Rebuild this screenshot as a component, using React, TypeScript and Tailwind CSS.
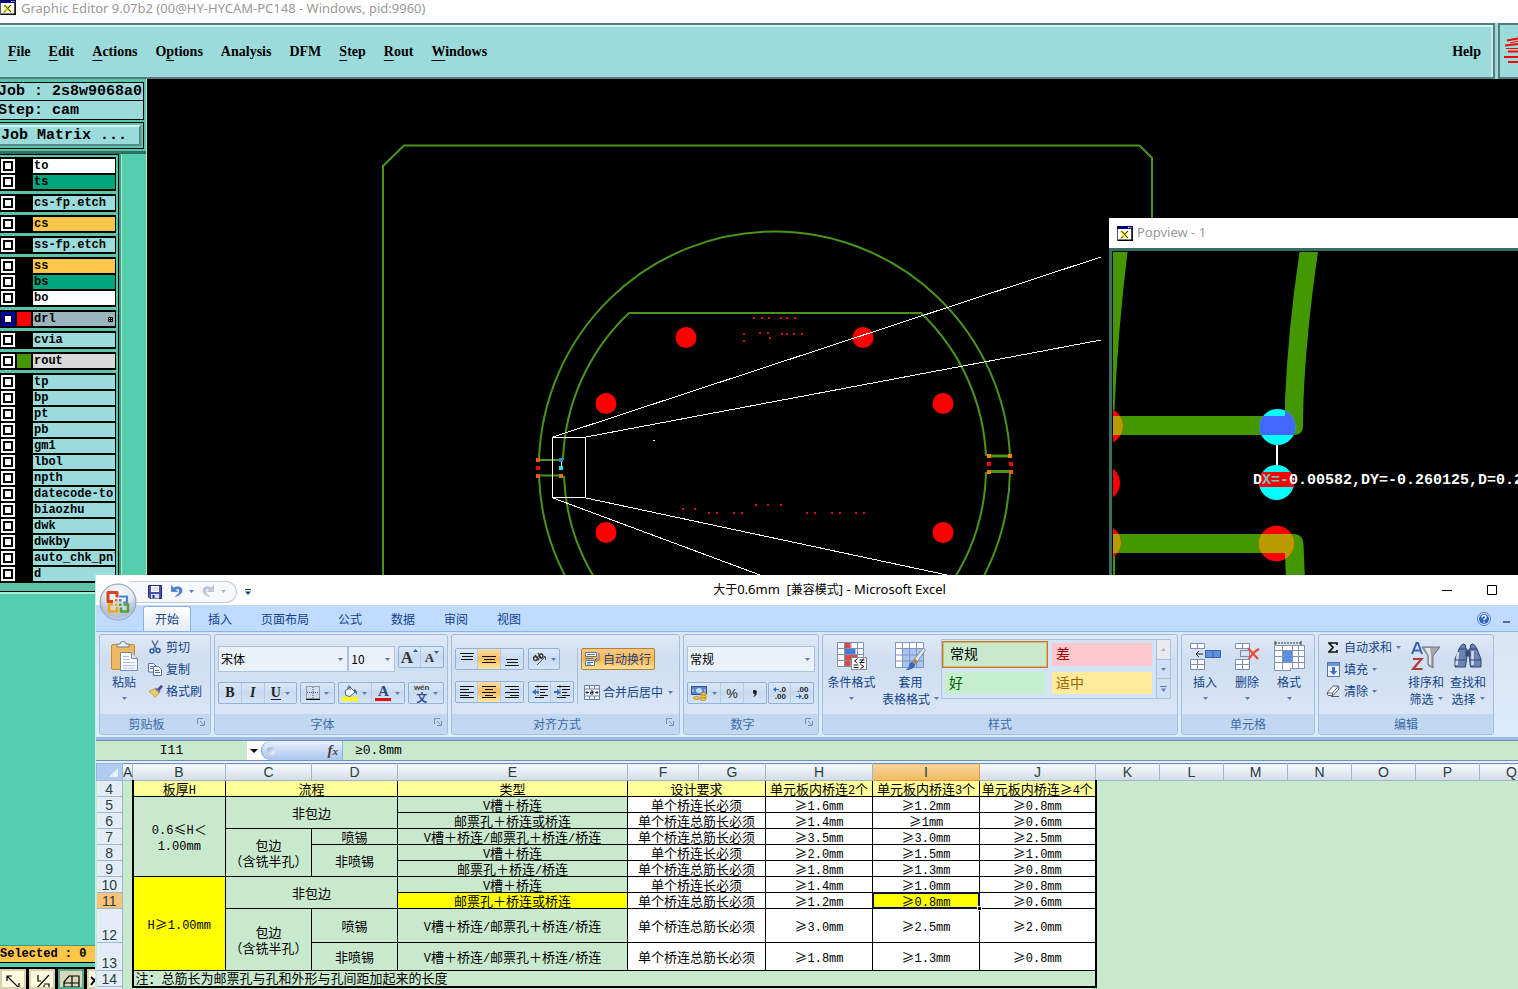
import React from "react";

/* ------------------------------------------------------------------ */
/* Shared bits                                                         */
/* ------------------------------------------------------------------ */

const CJK = "font-['Noto_Sans_CJK_SC',sans-serif]";
const MONO = "font-['Liberation_Mono',monospace]";

function Caret({ muted = false }: { muted?: boolean }) {
  return (
    <svg width="5" height="3" viewBox="0 0 5 3" className="shrink-0" aria-hidden="true">
      <path d="M0 0h5L2.5 3z" fill={muted ? "#a9b4c4" : "#5a7db5"} />
    </svg>
  );
}

function AppIcon() {
  return (
    <svg width="16" height="15" viewBox="0 0 16 15" className="shrink-0" aria-hidden="true">
      <rect x="0.5" y="0.5" width="15" height="14" fill="#fff" stroke="#555" />
      <rect x="0" y="0" width="16" height="3" fill="#000080" />
      <path d="M11 1.5h1.5M13.5 1.5h1" stroke="#fff" />
      <path d="M15 3v12M1 14.2h15" stroke="#000" strokeWidth="1.4" />
      <path d="M4 5l7 7M11 5l-7 7" stroke="#e6e000" strokeWidth="2.4" />
      <path d="M4.500 5l6.500 7M11 5l-3 3M6 10.500l-2 2" stroke="#333" strokeWidth="1" />
    </svg>
  );
}

/* Splits a cell text so that half-width characters keep a narrow face. */
function Mixed({ text }: { text: string }) {
  const parts = text.split(/([\x21-\x7e]+)/).filter(Boolean);
  return (
    <>
      {parts.map((p, i) =>
        /^[\x21-\x7e]+$/.test(p) ? (
          <span key={i} className="font-['Liberation_Mono',monospace] text-[12px] leading-[8px]">
            {p}
          </span>
        ) : (
          <React.Fragment key={i}>{p}</React.Fragment>
        )
      )}
    </>
  );
}

/* ------------------------------------------------------------------ */
/* Graphic editor                                                      */
/* ------------------------------------------------------------------ */

const menus: [string, number][] = [
  ["File", 0],
  ["Edit", 0],
  ["Actions", 0],
  ["Options", 1],
  ["Analysis", -1],
  ["DFM", -1],
  ["Step", 0],
  ["Rout", 0],
  ["Windows", 0],
];

function MenuLabel({ text, hot }: { text: string; hot: number }) {
  if (hot < 0) return <>{text}</>;
  return (
    <>
      {text.slice(0, hot)}
      <span className="underline decoration-1 underline-offset-4">{text[hot]}</span>
      {text.slice(hot + 1)}
    </>
  );
}

function MenuBar() {
  return (
    <div className="flex h-14 shrink-0 bg-[#9cdbdb] font-['Liberation_Serif',serif] text-[14px] font-bold text-black">
      <nav className="flex flex-1 items-center gap-[18px] border-y-2 border-r-2 border-[#567c7c] pl-2 pr-3 shadow-[inset_0_2px_0_#d4f4f4,inset_-2px_0_0_#c4ecec]">
        {menus.map(([m, hot]) => (
          <button key={m} type="button">
            <MenuLabel text={m} hot={hot} />
          </button>
        ))}
        <button type="button" className="ml-auto">
          Help
        </button>
      </nav>
      <div className="ml-[3px] w-5 shrink-0 overflow-hidden border-y-2 border-l-2 border-[#567c7c]">
        <svg width="18" height="52" viewBox="0 0 18 52" aria-hidden="true">
          <path d="M7 15.500L18 13.500M5 20.500L18 19M8 26.500h10M4 32h14M8 37h10" stroke="#f00" strokeWidth="2" />
          <path d="M10 18l8 -2M6 23.500h12" stroke="#f00" strokeWidth="1" />
        </svg>
      </div>
    </div>
  );
}

type Layer = { name: string; bg: string; swatch?: string; active?: boolean };
const AQ = "bg-[#9cdbdb]";
const layerGroups: Layer[][] = [
  [
    { name: "to", bg: "bg-white" },
    { name: "ts", bg: "bg-[#00a57b]" },
  ],
  [{ name: "cs-fp.etch", bg: AQ }],
  [{ name: "cs", bg: "bg-[#ffc64a]" }],
  [{ name: "ss-fp.etch", bg: AQ }],
  [
    { name: "ss", bg: "bg-[#ffc64a]" },
    { name: "bs", bg: "bg-[#00a57b]" },
    { name: "bo", bg: "bg-white" },
  ],
  [{ name: "drl", bg: "bg-[#9bb5bf]", swatch: "bg-[#ff0000]", active: true }],
  [{ name: "cvia", bg: AQ }],
  [{ name: "rout", bg: "bg-[#d9d9d9]", swatch: "bg-[#439800]" }],
  ["tp", "bp", "pt", "pb", "gm1", "lbol", "npth", "datecode-to", "biaozhu", "dwk", "dwkby", "auto_chk_pnl", "d"].map(
    (name) => ({ name, bg: AQ })
  ),
];

function LayerRow({ layer }: { layer: Layer }) {
  return (
    <label className="flex h-4 items-center gap-px">
      <span
        className={
          "flex size-[14px] shrink-0 items-center justify-center " + (layer.active ? "bg-[#0000b4]" : "bg-white")
        }
      >
        <input
          type="checkbox"
          defaultChecked={layer.active}
          className="block size-[10px] appearance-none border-2 border-black bg-white checked:border-[#000050]"
        />
      </span>
      <span className={"ml-px h-[14px] w-[14px] shrink-0 " + (layer.swatch ?? "bg-black")} />
      <span
        className={
          "ml-px flex h-[14px] min-w-0 flex-1 items-center justify-between overflow-hidden whitespace-nowrap pl-px " +
          layer.bg
        }
      >
        {layer.name}
        {layer.active && (
          <svg width="5" height="5" viewBox="0 0 5 5" className="mr-0.5 shrink-0" aria-hidden="true">
            <path d="M0.500 0.500h4v4h-4zM2.500 0v5M0 2.500h5" fill="none" stroke="#000" />
          </svg>
        )}
      </span>
    </label>
  );
}

function Sidebar() {
  return (
    <aside className={"flex w-[147px] shrink-0 flex-col border-r border-[#a8ecd8] bg-[#54cfae] font-bold text-black " + MONO}>
      <div className="bg-[#5cc5ae] pr-0.5 pt-[3px] text-[15px] leading-[17px]">
        <div className="h-[19px] whitespace-nowrap border-y border-r border-black bg-[#9cdbdb] -indent-0.5">
          Job : 2s8w9068a0
        </div>
        <div className="h-[19px] border-b border-r border-black bg-[#9cdbdb] leading-5 -indent-0.5">Step: cam</div>
        <div className="mt-0.5 h-[27px] border-y border-r border-black p-0.5 pl-0">
          <button
            type="button"
            className="h-full w-full border-b-2 border-r-2 border-t-2 border-b-[#568888] border-r-[#568888] border-t-[#d4f8f4] bg-[#9cdbdb] pl-px text-left"
          >
            Job Matrix ...
          </button>
        </div>
      </div>
      <div className="h-0.5 bg-[#5cc5ae]" />
      <div className="h-[3px] bg-[#2d7061]" />
      <div className="flex text-[12px] leading-[14px]">
        <div className="flex w-[119px] flex-col gap-[3px] border-r border-t border-black bg-[#5cc5a9] pb-2 pr-0.5 pt-0.5">
          {layerGroups.map((g, i) => (
            <div key={i} className="bg-black p-px">
              {g.map((l) => (
                <LayerRow key={l.name} layer={l} />
              ))}
            </div>
          ))}
        </div>
        <div className="w-[3px] border-r border-[#a8ecd8] bg-[#3f9c84]" />
      </div>
      <div className="h-px bg-black" />
      <div className="h-0.5 bg-[#a8ecd8]" />
      <div className="flex-1" />
      <div className="h-[18px] border-y border-b-black border-t-[#3f9c84] bg-[#ffc64a] text-[12px] leading-4">Selected : 0</div>
      <div className="mt-1 flex h-[22px] items-start border-t-2 border-black bg-black">
        <ToolButton label="Zoom">
          <path d="M5 5l12 12M5 10V5h5M17 12v5h-5" />
        </ToolButton>
        <ToolButton label="Scale">
          <path d="M5 18L18 4M7 4v6h3M13 13h5v5M13 18v-4" />
        </ToolButton>
        <ToolButton label="Grid" active>
          <path d="M4 20v-9l5-6h10v15M4 12h15M12 5v15M4 16h15" />
        </ToolButton>
        <ToolButton label="More">
          <path d="M2 6l6 6M8 6l-6 8" strokeWidth="2" />
        </ToolButton>
      </div>
    </aside>
  );
}

function ToolButton({ label, active, children }: { label: string; active?: boolean; children: React.ReactNode }) {
  return (
    <button
      type="button"
      aria-label={label}
      className={
        "mr-[3px] h-5 w-[26px] shrink-0 overflow-hidden border-2 " +
        (active ? "border-[#54a890] bg-[#d8d8b8]" : "border-[#d8d0b0] bg-[#fffce0]")
      }
    >
      <svg width="22" height="18" viewBox="0 0 22 18" fill="none" stroke="#000" strokeWidth="1.2">
        {children}
      </svg>
    </button>
  );
}

const drills: [number, number][] = [
  [686, 337],
  [863, 337],
  [606, 403],
  [943, 403],
  [606, 532],
  [943, 532],
];

const vias: [number, number][] = [
  [754, 318], [762, 318], [769, 318], [781, 318], [787, 318], [795, 318],
  [760, 333], [768, 333], [744, 334], [782, 334], [787, 334], [794, 334], [802, 334],
  [770, 338], [744, 341],
  [683, 509], [695, 509], [709, 513], [717, 513], [734, 513], [742, 513],
  [756, 505], [768, 505], [781, 505],
  [807, 513], [815, 513], [832, 513], [840, 513], [856, 513], [864, 513],
];

const bridgePads: [number, number, string][] = [
  [538, 460, "#f05a14"], [538, 468, "#ff0000"], [538, 476, "#f05a14"],
  [561, 460, "#2f86d8"], [561, 468, "#19e8f0"], [561, 476, "#e07a10"],
  [989, 456, "#f08010"], [1010, 456, "#f08010"],
  [989, 464, "#ff0000"], [1011, 464, "#ff0000"],
  [989, 472, "#f08010"], [1011, 472, "#f05a14"],
];

function BoardCanvas() {
  return (
    <svg
      className="block h-full min-w-0 flex-1 bg-black"
      viewBox="147 79 1371 910"
      preserveAspectRatio="xMinYMin slice"
      role="img"
      aria-label="Board outline"
    >
      <g fill="none" stroke="#4a9419" strokeWidth="2">
        <path d="M383 989V166L404 145.500H1139.500L1152 158V989" />
        <path d="M539 460A236 236 0 0 1 774.500 231.500A236 236 0 0 1 1010 456M539 476A236 236 0 0 0 573 590M1010 472A236 236 0 0 1 976 590" />
        <path d="M563 460A211.500 211.500 0 0 1 629 313H921A211.500 211.500 0 0 1 986 456M564 476A211.500 211.500 0 0 0 602.500 590M986 472A211.500 211.500 0 0 1 946.500 590" />
        <path d="M538 460h25M538 475.500h25" />
        <path d="M987 456h24M987 471.500h24" strokeWidth="3" />
      </g>
      <g fill="#ff0000">
        {drills.map(([x, y]) => (
          <circle key={x + "-" + y} cx={x} cy={y + 0.5} r="10.500" />
        ))}
      </g>
      <g fill="#d01818" shapeRendering="crispEdges">
        {vias.map(([x, y]) => (
          <rect key={x + "-" + y} x={x - 1} y={y - 1} width="2" height="2" />
        ))}
      </g>
      <g stroke="#fff" fill="none" shapeRendering="crispEdges">
        <path d="M552.500 437.500h33v60h-33z" />
        <path d="M553 437L1101 257M586 437L1101 340M553 498L760 575L790 587M586 498L947 575L1000 587" />
      </g>
      <rect x="653" y="440" width="2" height="1" fill="#fff" />
      <g shapeRendering="crispEdges">
        {bridgePads.map(([x, y, c]) => (
          <rect key={x + "-" + y} x={x - 2} y={y - 2} width="4" height="4" fill={c} />
        ))}
        <path d="M561 462v5" stroke="#fff" />
      </g>
    </svg>
  );
}

const UPPER =
  "M1299.500 252H1318Q1306 335 1303.500 400L1303 426Q1303 435 1294 435H1113V416H1285V400Q1288 330 1299.500 252Z";
const LOWER = "M1113 534H1295Q1303 535 1303.500 544L1305 580H1286L1285 553H1113Z";

function Popview() {
  return (
    <section className="absolute left-[1109px] right-0 top-[218px] flex h-[360px] flex-col bg-white">
      <header className="flex h-[30px] shrink-0 items-center gap-1 pl-2 font-['Noto_Sans',sans-serif] text-[13px] text-[#999]">
        <AppIcon />
        <span>Popview - 1</span>
      </header>
      <div className="min-h-0 flex-1 border-l-[3px] border-t-[3px] border-[#347060] bg-black pl-px pt-px">
        <svg
          className="block h-full w-full bg-black"
          viewBox="1113 252 405 326"
          preserveAspectRatio="xMinYMin slice"
          role="img"
          aria-label="Measurement detail"
        >
          <defs>
            <clipPath id="padTop"><circle cx="1277.500" cy="427" r="18" /></clipPath>
            <clipPath id="padMid"><circle cx="1276.500" cy="482.500" r="17.500" /></clipPath>
            <clipPath id="padsLow">
              <circle cx="1276.500" cy="543.500" r="17.800" />
              <circle cx="1104" cy="542.500" r="17" />
              <circle cx="1105" cy="426" r="18" />
            </clipPath>
          </defs>
          <g fill="#439800">
            <path d="M1113 252h14.500Q1118 330 1114.500 410H1113zM1113 553h2v25h-2z" />
            <path d={UPPER} />
            <path d={LOWER} />
          </g>
          <g fill="#ff0000">
            <circle cx="1105" cy="426" r="18" />
            <circle cx="1102" cy="483" r="18" />
            <circle cx="1104" cy="542.500" r="17" />
            <circle cx="1276.500" cy="543.500" r="17.800" />
          </g>
          <g clipPath="url(#padsLow)" fill="#bb9a00">
            <path d={UPPER} />
            <path d={LOWER} />
          </g>
          <circle cx="1277.500" cy="427" r="18" fill="#00ffff" />
          <path d={UPPER} fill="#4367ff" clipPath="url(#padTop)" />
          <path d="M1277 445v20" stroke="#fff" strokeWidth="2" />
          <circle cx="1276.500" cy="482.500" r="17.500" fill="#00ffff" />
          <rect x="1255" y="472" width="44" height="15" fill="#ff0000" clipPath="url(#padMid)" />
          <text x="1253" y="484" fill="#fff" className="font-['Liberation_Mono',monospace] text-[15px] font-bold">
            D<tspan fill="#6fc4c4">X=-</tspan>0.00582,DY=-0.260125,D=0.2
          </text>
        </svg>
      </div>
    </section>
  );
}

/* ------------------------------------------------------------------ */
/* Spreadsheet window: title, tabs                                     */
/* ------------------------------------------------------------------ */

function OfficeButton() {
  return (
    <button type="button" aria-label="Office" className="absolute left-[3px] top-2 z-10">
      <svg width="38" height="38" viewBox="0 0 38 38">
        <defs>
          <radialGradient id="orb" cx="0.5" cy="0.3" r="0.75">
            <stop offset="0" stopColor="#ffffff" />
            <stop offset="0.55" stopColor="#dfe6f0" />
            <stop offset="0.8" stopColor="#aebdd2" />
            <stop offset="1" stopColor="#f4f8fc" />
          </radialGradient>
        </defs>
        <circle cx="19" cy="19" r="18" fill="url(#orb)" stroke="#8a9bb5" />
        <path d="M2 20a17 17 0 0 0 34 0q-17 -5 -34 0z" fill="#b6c4da" opacity="0.45" />
        <g fill="none" strokeLinejoin="round">
          <path d="M14 18.500H9V9.500h9v5" stroke="#d8451c" strokeWidth="3" />
          <path d="M20 13.500h8v6h-3.500" stroke="#4a84d4" strokeWidth="2.200" />
          <path d="M14 21.500h-4v7h8v-4.500" stroke="#f2a814" strokeWidth="2.600" />
          <path d="M24.500 21.500h4.500v7h-7v-4" stroke="#54a038" strokeWidth="2.600" />
        </g>
        <path d="M16 16h2.500v2.500H16z" fill="#e8702c" />
        <path d="M20 16h2.500v2.500H20z" fill="#4a84d4" />
        <path d="M16 20.500h2.500V23H16z" fill="#f2a814" />
        <path d="M20 20.500h2.500V23H20z" fill="#54a038" />
      </svg>
    </button>
  );
}

function TitleBar() {
  return (
    <header className="flex h-[30px] shrink-0 items-center bg-white text-[12px] text-black">
      <div className="flex w-[155px] items-center gap-2 pl-[34px] pt-[3px]">
        <div className="flex h-[22px] w-[109px] items-center rounded-r-full border border-l-0 border-[#c5cbd6] bg-[#f6f8fb] pl-[18px]">
          <button type="button" aria-label="保存">
            <svg width="14" height="14" viewBox="0 0 14 14">
              <path d="M0.500 0.500h13v13h-11.500l-1.500-1.500z" fill="#4a4fb0" stroke="#2a2c80" />
              <rect x="3" y="1" width="8" height="6" fill="#fff" />
              <path d="M4 3h6M4 5h6" stroke="#b9c4e0" />
              <rect x="3" y="9" width="8" height="4.500" fill="#d8dce8" />
              <rect x="4.500" y="10" width="2" height="3" fill="#22245c" />
            </svg>
          </button>
          <button type="button" aria-label="撤消" className="ml-2 flex items-center gap-1.5">
            <svg width="13" height="13" viewBox="0 0 13 13" fill="none">
              <path d="M1.500 0.500v6h6L5 4.500q4-2 4.500 1.500 0 3-4 5.500 7-2 6.500-7Q10.500 0 3.500 3z" fill="#4f84d6" stroke="#3565b4" strokeWidth="0.600" />
            </svg>
            <Caret />
          </button>
          <button type="button" aria-label="恢复" className="ml-2 flex items-center gap-1.5">
            <svg width="13" height="13" viewBox="0 0 13 13" fill="none">
              <path d="M11.500 0.500v6h-6L8 4.500q-4-2-4.500 1.500 0 3 4 5.500-7-2-6.500-7Q2.500 0 9.500 3z" fill="#c3cad8" stroke="#a8b2c4" strokeWidth="0.600" />
            </svg>
            <Caret muted />
          </button>
        </div>
        <button type="button" aria-label="自定义快速访问工具栏" className="shrink-0">
          <svg width="6" height="6" viewBox="0 0 6 6">
            <path d="M0 0.500h6" stroke="#223a66" />
            <path d="M0 2.500h6L3 6z" fill="#223a66" />
          </svg>
        </button>
      </div>
      <h1 className="min-w-0 flex-1 whitespace-pre text-center font-['Noto_Sans',sans-serif] text-[13px]">
        <span className="font-['Noto_Sans_CJK_SC',sans-serif] text-[12px]">大于</span>
        0.6mm&nbsp; [
        <span className="font-['Noto_Sans_CJK_SC',sans-serif] text-[12px]">兼容模式</span>
        ] - Microsoft Excel
      </h1>
      <div className="flex w-[110px] items-center pl-[34px]">
        <button type="button" aria-label="最小化">
          <svg width="10" height="10" viewBox="0 0 10 10"><path d="M0 5.500h10" stroke="#000" /></svg>
        </button>
        <button type="button" aria-label="最大化" className="ml-[35px]">
          <svg width="10" height="10" viewBox="0 0 10 10"><path d="M0.500 0.500h9v9h-9z" fill="none" stroke="#000" /></svg>
        </button>
      </div>
    </header>
  );
}

const tabs = ["开始", "插入", "页面布局", "公式", "数据", "审阅", "视图"];

function TabRow() {
  return (
    <div className="flex h-[26px] shrink-0 items-end gap-[5px] bg-[#bfdbff] pl-[47px] text-[12px] text-[#15428b]">
      {tabs.map((t, i) => (
        <button
          key={t}
          type="button"
          className={
            "h-[25px] " +
            (i === 0
              ? "rounded-t-[3px] border-x border-t border-[#8db2e3] bg-gradient-to-b from-white to-[#e2ecf8] px-[11px]"
              : "px-3")
          }
        >
          {t}
        </button>
      ))}
      <div className="ml-auto flex h-[25px] items-center gap-3 pr-2">
        <button type="button" aria-label="帮助">
          <svg width="14" height="14" viewBox="0 0 14 14">
            <circle cx="7" cy="7" r="6.500" fill="#dce9fb" stroke="#4a78c0" />
            <circle cx="7" cy="7" r="5" fill="#2f62c4" />
            <path d="M5 5.500q0-2 2-2t2 1.800q0 1-2 2.200v0.800M7 9.500v1.200" fill="none" stroke="#fff" strokeWidth="1.400" />
          </svg>
        </button>
        <button type="button" aria-label="最小化工作簿">
          <svg width="7" height="10" viewBox="0 0 7 10"><path d="M0 8h7" stroke="#5b6f8f" strokeWidth="2" /></svg>
        </button>
      </div>
    </div>
  );
}

/* ------------------------------------------------------------------ */
/* Ribbon                                                              */
/* ------------------------------------------------------------------ */

function Group({ title, width, launcher, children }: { title: string; width: string; launcher?: boolean; children: React.ReactNode }) {
  return (
    <section
      className={
        "flex h-[101px] shrink-0 flex-col overflow-hidden rounded-[3px] border border-[#a3bfe0] bg-gradient-to-b from-[#dfe9f5] via-[#cfdef0] via-25% to-[#dbe8f6] " +
        width
      }
    >
      <div className="min-h-0 flex-1">{children}</div>
      <div className="flex h-5 shrink-0 items-center bg-[#c1d8f0] text-[12px] text-[#3e6aaa]">
        <h2 className={"flex-1 text-center " + (launcher ? "pr-1" : "")}>{title}</h2>
        {launcher && (
          <button type="button" aria-label={title + "选项"} className="mb-1 mr-[5px]">
            <svg width="8" height="8" viewBox="0 0 8 8" fill="none" stroke="#7490b8">
              <path d="M6 0.500H0.500V6M3 3l3.500 3.500M7.500 3v4.500H3" />
            </svg>
          </button>
        )}
      </div>
    </section>
  );
}

function BtnBox({ children }: { children: React.ReactNode }) {
  return (
    <div className="flex h-[22px] items-stretch divide-x divide-[#b4cbe6] overflow-hidden rounded-[2px] border border-[#8fb1dc] bg-gradient-to-b from-[#dce8f6] via-[#c8daef] to-[#d6e5f6]">
      {children}
    </div>
  );
}

function Btn({ label, width, on, drop, children }: { label: string; width: string; on?: boolean; drop?: boolean; children: React.ReactNode }) {
  return (
    <button
      type="button"
      aria-label={label}
      className={
        "flex items-center justify-center gap-1 text-[#222] " +
        width +
        (on ? " bg-gradient-to-b from-[#fddba8] via-[#fdbd5c] to-[#fee8a0]" : "")
      }
    >
      {children}
      {drop && <Caret />}
    </button>
  );
}

function Combo({ label, value, width }: { label: string; value: string; width: string }) {
  return (
    <div className={"flex h-[26px] items-center border border-[#abc3e2] bg-[#eaf1fb] pr-1 " + width}>
      <select aria-label={label} className="min-w-0 flex-1 appearance-none bg-transparent pl-0.5 text-[12px] text-black">
        <option>{value}</option>
      </select>
      <Caret />
    </div>
  );
}

function Small({ label, drop, children }: { label: string; drop?: boolean; children: React.ReactNode }) {
  return (
    <button type="button" className="flex h-[22px] items-center gap-1 whitespace-nowrap text-[12px] text-[#15428b]">
      <span className="flex w-[14px] justify-center">{children}</span>
      <span>{label}</span>
      {drop && <Caret />}
    </button>
  );
}

function Big({ lines, width, inline, children }: { lines: string[]; width: string; inline?: boolean; children: React.ReactNode }) {
  return (
    <button
      type="button"
      className={"flex flex-col items-center whitespace-nowrap pt-1 text-[12px] leading-[17px] text-[#15428b] " + width}
    >
      <span className="flex h-[34px] items-center">{children}</span>
      {lines.map((l, i) =>
        inline && i === lines.length - 1 ? (
          <span key={l} className="flex items-center gap-1">
            {l}
            <Caret />
          </span>
        ) : (
          <span key={l}>{l}</span>
        )
      )}
      {!inline && (
        <span className="flex h-4 items-center">
          <Caret />
        </span>
      )}
    </button>
  );
}

function Lines({ d }: { d: string }) {
  return (
    <svg width="14" height="14" viewBox="0 0 14 14" aria-hidden="true">
      <path d={d} stroke="#111" fill="none" />
    </svg>
  );
}

function GroupClipboard() {
  return (
    <Group title="剪贴板" width="w-[112px]" launcher>
      <div className="flex">
        <Big lines={["粘贴"]} width="w-[48px]">
          <svg width="27" height="30" viewBox="0 0 27 30">
            <rect x="0.500" y="3.500" width="23" height="25" rx="1.500" fill="#f0b860" stroke="#c88a34" />
            <path d="M6 6V3h3q1-3 3-3t3 3h3v3z" fill="#e8ecf2" stroke="#6f7a8c" />
            <path d="M9.500 11.500h11l6 6v12h-17z" fill="#fff" stroke="#6d88b4" />
            <path d="M20.500 11.500v6h6" fill="#dde7f5" stroke="#6d88b4" />
            <path d="M12 15.500h6M12 18.500h6M12 21.500h12M12 24.500h12M12 27h12" stroke="#a8bcdc" />
          </svg>
        </Big>
        <div className="flex flex-col pt-px">
          <Small label="剪切">
            <svg width="12" height="14" viewBox="0 0 12 14" fill="none">
              <path d="M3 0.500L7.500 9M9 0.500L4.500 9" stroke="#5c6f94" strokeWidth="1.500" />
              <circle cx="3" cy="11" r="2" stroke="#2a5db0" strokeWidth="1.500" />
              <circle cx="9" cy="10.500" r="2" stroke="#2a5db0" strokeWidth="1.500" />
            </svg>
          </Small>
          <Small label="复制">
            <svg width="14" height="13" viewBox="0 0 14 13" fill="#fff" stroke="#4a6fae">
              <path d="M0.500 0.500h5l2.500 2.500v6h-7.500zM2 3.500h3M2 5.500h3" />
              <path d="M5.500 3.500h5l3 3v6h-8zM7 7.500h4M7 9.500h5" />
            </svg>
          </Small>
          <Small label="格式刷">
            <svg width="15" height="13" viewBox="0 0 15 13" className="shrink-0">
              <path d="M9 4l4-4 2 1.500-3.500 4.500z" fill="#4a4a9a" />
              <path d="M1 6.500l7-3.500 4 4-5 5.500q-2-4-6-6z" fill="#f1d060" stroke="#b3892a" strokeWidth="0.700" />
              <path d="M7.500 3.500l4.500 4" stroke="#6a7cae" strokeWidth="2" />
            </svg>
          </Small>
        </div>
      </div>
    </Group>
  );
}

function GroupFont() {
  return (
    <Group title="字体" width="w-[234px]" launcher>
      <div className="flex flex-col gap-2.5 px-[3px] pt-[11px]">
        <div className="flex h-[26px]">
          <Combo label="字体" value="宋体" width="w-[131px]" />
          <Combo label="字号" value="10" width="w-[47px]" />
          <div className="ml-[3px]">
            <BtnBox>
              <Btn label="增大字号" width="w-[22px]">
                <span className="flex font-['Liberation_Serif',serif] text-[17px] font-bold leading-none text-[#333]">
                  A
                  <svg width="5" height="3" viewBox="0 0 5 3"><path d="M0 3h5L2.500 0z" fill="#2c5aa8" /></svg>
                </span>
              </Btn>
              <Btn label="减小字号" width="w-[22px]">
                <span className="flex font-['Liberation_Serif',serif] text-[13px] font-bold leading-none text-[#333]">
                  A
                  <svg width="5" height="3" viewBox="0 0 5 3"><path d="M0 0h5L2.500 3z" fill="#2c5aa8" /></svg>
                </span>
              </Btn>
            </BtnBox>
          </div>
        </div>
        <div className="flex gap-[3px] font-['Liberation_Serif',serif] text-[14px] leading-none">
          <BtnBox>
            <Btn label="加粗" width="w-[23px]"><b>B</b></Btn>
            <Btn label="倾斜" width="w-[23px]"><i className="font-bold">I</i></Btn>
            <Btn label="下划线" width="w-[32px]" drop><b className="underline underline-offset-2">U</b></Btn>
          </BtnBox>
          <BtnBox>
            <Btn label="边框" width="w-[33px]" drop>
              <svg width="14" height="14" viewBox="0 0 14 14" fill="none">
                <path d="M0.500 0.500h13v12H0.500zM7 1v12M1 6.500h12" stroke="#555" strokeDasharray="1 1" />
                <path d="M0 13.500h14" stroke="#000" />
              </svg>
            </Btn>
          </BtnBox>
          <BtnBox>
            <Btn label="填充颜色" width="w-[33px]" drop>
              <svg width="16" height="16" viewBox="0 0 16 16">
                <path d="M3 6l5-4 5 5-5 4.500-4 -1z" fill="#fff" stroke="#4a6088" />
                <path d="M6 5V1.500q1.500-1.500 2 0V5" fill="none" stroke="#4a6088" />
                <path d="M12 4q4 2 3 6-1-3-3-3z" fill="#2c5fb4" />
                <rect x="0" y="12" width="16" height="4" fill="#ffff00" />
              </svg>
            </Btn>
            <Btn label="字体颜色" width="w-[33px]" drop>
              <span className="flex flex-col items-center font-bold leading-[13px] text-[#2b4a80]">
                <span className="text-[15px]">A</span>
                <span className="h-[3px] w-4 bg-[#e01010]" />
              </span>
            </Btn>
          </BtnBox>
          <BtnBox>
            <Btn label="拼音" width="w-[34px]" drop>
              <span className={"flex flex-col items-center text-[#3450a4] " + CJK}>
                <span className="font-['Liberation_Sans',sans-serif] text-[8px] font-bold leading-[9px] text-[#444]">wén</span>
                <span className="text-[11px] font-bold leading-[11px]">文</span>
              </span>
            </Btn>
          </BtnBox>
        </div>
      </div>
    </Group>
  );
}

function GroupAlign() {
  return (
    <Group title="对齐方式" width="w-[229px]" launcher>
      <div className="flex gap-[3px] px-[3px] pt-[13px]">
        <div className="flex flex-col gap-[11px]">
          <div className="flex gap-1">
            <BtnBox>
              <Btn label="顶端对齐" width="w-[22px]"><Lines d="M0 1.500h14M2 4.500h11M1 7.500h12" /></Btn>
              <Btn label="垂直居中" width="w-[23px]" on><Lines d="M0 4.500h14M2 7.500h11M0 10.500h14" /></Btn>
              <Btn label="底端对齐" width="w-[22px]"><Lines d="M1 7.500h12M2 10.500h11M0 13.500h14" /></Btn>
            </BtnBox>
            <BtnBox>
              <Btn label="方向" width="w-[30px]" drop>
                <svg width="15" height="14" viewBox="0 0 15 14" fill="none" stroke="#333">
                  <circle cx="3.500" cy="6.500" r="2" strokeWidth="1.300" />
                  <path d="M3 3l4 5M6 1l4 6" strokeWidth="1.300" />
                  <circle cx="9" cy="4" r="2" strokeWidth="1.300" />
                  <path d="M5 13l8-8M13.500 8V4.500H10" stroke="#555" />
                </svg>
              </Btn>
            </BtnBox>
          </div>
          <div className="flex gap-1">
            <BtnBox>
              <Btn label="左对齐" width="w-[22px]"><Lines d="M0 1.500h14M0 4.500h9M0 7.500h14M0 10.500h9M0 12.500h14" /></Btn>
              <Btn label="居中" width="w-[23px]" on><Lines d="M0 1.500h14M3 4.500h8M0 7.500h14M3 10.500h8M0 12.500h14" /></Btn>
              <Btn label="右对齐" width="w-[22px]"><Lines d="M0 1.500h14M5 4.500h9M0 7.500h14M5 10.500h9M0 12.500h14" /></Btn>
            </BtnBox>
            <BtnBox>
              <Btn label="减少缩进" width="w-[22px]">
                <svg width="16" height="14" viewBox="0 0 16 14">
                  <path d="M3 1.500h13M8 4.500h8M8 7.500h5M8 10.500h8M3 12.500h9" stroke="#111" />
                  <path d="M6 0v14" stroke="#555" strokeDasharray="1 1" />
                  <path d="M0 7l4-3v2h3v2H4v2z" fill="#3c6cc8" />
                </svg>
              </Btn>
              <Btn label="增加缩进" width="w-[22px]">
                <svg width="16" height="14" viewBox="0 0 16 14">
                  <path d="M3 1.500h13M8 4.500h8M8 7.500h5M8 10.500h8M3 12.500h9" stroke="#111" />
                  <path d="M6 0v14" stroke="#555" strokeDasharray="1 1" />
                  <path d="M7 7L3 4v2H0v2h3v2z" fill="#3c6cc8" />
                </svg>
              </Btn>
            </BtnBox>
          </div>
        </div>
        <div className="h-[56px] w-px bg-[#a9c2e0]" />
        <div className="flex flex-col items-start gap-[11px] text-[12px] text-[#15428b]">
          <button
            type="button"
            className="flex h-[22px] items-center gap-[3px] whitespace-nowrap rounded-[2px] border border-[#b0803c] bg-gradient-to-b from-[#f8c880] via-[#fbb650] to-[#fde090] pl-0.5 pr-[3px]"
          >
            <svg width="16" height="16" viewBox="0 0 16 16" fill="#fff" stroke="#5874a4">
              <path d="M1.500 1.500h11v4h-11zM1.500 9.500h9v5h-9z" />
              <path d="M3 3.500h8M3 11.500h6M3 13h4M1 7.500h8" />
              <path d="M15 2v7h-3M13 7l-2 2 2 2" fill="none" />
            </svg>
            自动换行
          </button>
          <button type="button" className="flex h-[22px] items-center gap-[3px] whitespace-nowrap pl-[3px]">
            <svg width="16" height="15" viewBox="0 0 16 15" fill="#f4f8ff" stroke="#6a80a8">
              <path d="M0.500 0.500h15v14H0.500zM5.500 0.500v3.500M10.500 0.500v3.500M5.500 11v3.500M10.500 11v3.500M0.500 4h15M0.500 11h15" />
              <path d="M2 7.500h3M11 7.500h3M3.500 6l-1.500 1.500 1.500 1.500M12.500 6l1.500 1.500-1.500 1.500" stroke="#333" />
              <path d="M6.500 6h2.500v3h-2.500v-1.500h2.500" stroke="#222" />
            </svg>
            合并后居中
            <span className="ml-0.5"><Caret /></span>
          </button>
        </div>
      </div>
    </Group>
  );
}

function GroupNumber() {
  return (
    <Group title="数字" width="w-[136px]" launcher>
      <div className="flex flex-col gap-2.5 px-[3px] pt-[11px]">
        <Combo label="数字格式" value="常规" width="w-[128px]" />
        <div className="flex justify-between pr-px">
          <BtnBox>
            <Btn label="会计数字格式" width="w-[33px]" drop>
              <svg width="17" height="16" viewBox="0 0 17 16">
                <rect x="0.500" y="1.500" width="15" height="8" fill="#5b86cc" stroke="#2f5596" />
                <ellipse cx="8" cy="5.500" rx="3" ry="2.500" fill="#c6d9f4" />
                <path d="M2 4v3M14 4v3" stroke="#c6d9f4" />
                <ellipse cx="12.500" cy="9" rx="3" ry="1.500" fill="#f4ca4c" stroke="#a87818" strokeWidth="0.700" />
                <ellipse cx="12.500" cy="11.500" rx="3" ry="1.500" fill="#f4ca4c" stroke="#a87818" strokeWidth="0.700" />
                <ellipse cx="12" cy="14" rx="3" ry="1.500" fill="#f4ca4c" stroke="#a87818" strokeWidth="0.700" />
                <ellipse cx="5.500" cy="13" rx="3" ry="1.500" fill="#f4ca4c" stroke="#a87818" strokeWidth="0.700" />
              </svg>
            </Btn>
            <Btn label="百分比样式" width="w-[23px]">
              <span className="font-['Liberation_Sans',sans-serif] text-[13px] leading-none">%</span>
            </Btn>
            <Btn label="千位分隔样式" width="w-[22px]">
              <svg width="4" height="7" viewBox="0 0 4 7"><path d="M2 0a2 2 0 0 1 2 2q0 3-3 5l-0.500-0.500q1.500-1.500 1-2.500a2 2 0 0 1 0.500-4z" fill="#222" /></svg>
            </Btn>
          </BtnBox>
          <BtnBox>
            <Btn label="增加小数位数" width="w-[22px]">
              <span className="flex flex-col items-end font-['Liberation_Sans',sans-serif] text-[8px] font-bold leading-[7px]">
                <span className="flex items-center">
                  <svg width="6" height="5" viewBox="0 0 6 5"><path d="M0 2.500L3 0v2h3v1H3v2z" fill="#2f66c8" /></svg>.0
                </span>
                <span>.00</span>
              </span>
            </Btn>
            <Btn label="减少小数位数" width="w-[22px]">
              <span className="flex flex-col items-end font-['Liberation_Sans',sans-serif] text-[8px] font-bold leading-[7px]">
                <span>.00</span>
                <span className="flex items-center">
                  <svg width="6" height="5" viewBox="0 0 6 5"><path d="M6 2.500L3 0v2H0v1h3v2z" fill="#2f66c8" /></svg>.0
                </span>
              </span>
            </Btn>
          </BtnBox>
        </div>
      </div>
    </Group>
  );
}

function GroupStyles() {
  return (
    <Group title="样式" width="w-[356px]">
      <div className="flex">
        <Big lines={["条件格式"]} width="w-[57px]">
          <svg width="30" height="28" viewBox="0 0 30 28">
            <path d="M0.500 0.500h26v24H0.500zM0.500 6.500h26M0.500 12.500h26M0.500 18.500h26M7.500 0.500v24M14 0.500v24M20.500 0.500v24" fill="#fff" stroke="#7b90b8" />
            <path d="M8 1h5.500v5H8zM8 13h12v5H8zM8 19h5.500v5H8z" fill="#e04a3c" />
            <path d="M8 7h10.500v5H8z" fill="#4a7ad8" />
            <rect x="14.500" y="15.500" width="15" height="12" fill="#fff" stroke="#7d8798" />
            <path d="M20.500 17l-3 2 3 2M16.500 23h5M16.500 25.500h5M22.500 18h5M22.500 20.500h5M26.500 16.500l-3 5M23.500 22.500l3.500 2-3.500 2" fill="none" stroke="#111" />
          </svg>
        </Big>
        <Big lines={["套用", "表格格式"]} width="w-[61px]" inline>
          <svg width="31" height="29" viewBox="0 0 31 29">
            <path d="M0.500 0.500h28v25h-28z" fill="#fff" />
            <path d="M7.500 6.500h21v19h-21z" fill="#a9c4ef" />
            <path d="M0.500 0.500h28v25h-28zM0.500 6.500h28M0.500 13h28M0.500 19h28M7.500 0.500v25M14.500 0.500v25M21.500 0.500v25" fill="none" stroke="#8096c0" />
            <path d="M28 6l2.500 2-8 11.500-3-2.500z" fill="#dfe3ea" stroke="#6a6f7a" strokeWidth="0.700" />
            <path d="M19.500 17l3.500 3-2 2-3.500-3z" fill="#b57a3c" />
            <path d="M17 19.500l3.500 3q-2 5.500-10 5.500 3.500-2 3.500-4.500t3-4z" fill="#3c68b8" />
          </svg>
        </Big>
        <div className="mt-1 flex h-[60px] w-[230px] border border-[#a9c2e2] bg-[#d5e4f5] text-[14px]">
          <div className="grid flex-1 grid-cols-[106px_1fr] grid-rows-2 gap-x-1 pb-px pr-1">
            <button
              type="button"
              className="mb-px mt-px border-2 border-[#e8b050] bg-[#c9e9cd] pb-0.5 pl-1.5 text-left leading-none text-black outline outline-1 -outline-offset-1 outline-[#b08040]"
            >
              常规
            </button>
            <button type="button" className="my-[3px] bg-[#ffc7ce] pb-0.5 pl-1 text-left leading-none text-[#9c0006]">差</button>
            <button type="button" className="m-[3px] bg-[#c6efce] pb-0.5 pl-1 text-left leading-none text-[#006100]">好</button>
            <button type="button" className="my-[3px] bg-[#ffeb9c] pb-0.5 pl-1 text-left leading-none text-[#9c6500]">适中</button>
          </div>
          <div className="flex w-[14px] flex-col divide-y divide-[#a9c2e2] border-l border-[#a9c2e2]">
            <button type="button" aria-label="上一行" className="flex flex-1 items-center justify-center bg-[#e8eaee]">
              <svg width="5" height="3" viewBox="0 0 5 3"><path d="M0 3h5L2.500 0z" fill="#a9b4c4" /></svg>
            </button>
            <button type="button" aria-label="下一行" className="flex flex-1 items-center justify-center bg-[#cfe0f5]">
              <Caret />
            </button>
            <button type="button" aria-label="其他" className="flex flex-1 items-center justify-center bg-[#cfe0f5]">
              <svg width="7" height="6" viewBox="0 0 7 6"><path d="M0 0.500h7" stroke="#5a7db5" /><path d="M1 2.500h5L3.500 6z" fill="#5a7db5" /></svg>
            </button>
          </div>
        </div>
      </div>
    </Group>
  );
}

function GroupCells() {
  return (
    <Group title="单元格" width="w-[134px]">
      <div className="flex pl-0.5">
        <Big lines={["插入"]} width="w-[42px]">
          <svg width="31" height="27" viewBox="0 0 31 27" stroke="#7d8fb0">
            <path d="M0.500 0.500h14v5h-14zM7.500 0.500v5M0.500 16.500h14v10h-14zM7.500 16.500v10M0.500 21.500h14" fill="#fff" />
            <path d="M15.500 7.500h15v7h-15zM23 7.500v7" fill="#5f8fe0" stroke="#3a62a8" />
            <path d="M6 11h7M9 8l-3 3 3 3" fill="none" stroke="#222" />
          </svg>
        </Big>
        <Big lines={["删除"]} width="w-[42px]">
          <svg width="25" height="27" viewBox="0 0 25 27" stroke="#7d8fb0">
            <path d="M0.500 0.500h14v5h-14zM7.500 0.500v5M0.500 16.500h14v10h-14zM7.500 16.500v10M0.500 21.500h14" fill="#fff" />
            <path d="M5.500 7.500h9v6h-9z" fill="none" stroke="#334" strokeDasharray="1 1" />
            <path d="M13 5l10 11M24 6q-6 3-10 10" fill="none" stroke="#ee4a36" strokeWidth="2.200" />
          </svg>
        </Big>
        <Big lines={["格式"]} width="w-[42px]">
          <svg width="31" height="30" viewBox="0 0 31 30" stroke="#8093b8">
            <path d="M1 2h26" stroke="#333" strokeDasharray="2 1" />
            <path d="M1 0v4M27 0v4" stroke="#333" />
            <path d="M0.500 4.500h30v23h-14v2h-16z" fill="#fff" />
            <path d="M9 10h9v11H9z" fill="#5f8fe0" stroke="none" />
            <path d="M8.500 4.500v24M18.500 4.500v23M24.500 4.500v23M0.500 9.500h30M0.500 15.500h8M18 15.500h12M0.500 21.500h30" fill="none" />
          </svg>
        </Big>
      </div>
    </Group>
  );
}

function GroupEdit() {
  return (
    <Group title="编辑" width="w-[176px]">
      <div className="flex">
        <div className="flex w-[86px] flex-col pl-[7px] pt-px">
          <Small label="自动求和" drop>
            <svg width="10" height="11" viewBox="0 0 10 11"><path d="M9 3V1H1l4 4.500L1 10h8V8" fill="none" stroke="#111" strokeWidth="1.700" /></svg>
          </Small>
          <Small label="填充" drop>
            <svg width="13" height="15" viewBox="0 0 13 15">
              <rect x="0.500" y="0.500" width="12" height="14" fill="#f2f7ff" stroke="#5474ac" />
              <rect x="1" y="1" width="11" height="3" fill="#6a94dc" />
              <path d="M5 5h3v4h2.500L6.500 13 2.500 9H5z" fill="#3f72d0" />
            </svg>
          </Small>
          <Small label="清除" drop>
            <svg width="14" height="12" viewBox="0 0 14 12">
              <path d="M1 8l6-7h5.500l0.500 3-6 6.500H2z" fill="#fff" stroke="#555f74" />
              <path d="M1 8h5.500l6-7M6.500 8v3M5 11.500h8" fill="none" stroke="#555f74" />
            </svg>
          </Small>
        </div>
        <Big lines={["排序和", "筛选"]} width="w-[42px]" inline>
          <svg width="30" height="29" viewBox="0 0 30 29">
            <path d="M1 12L5.500 1h1.500l4 11M3 8.500h6" fill="none" stroke="#3a62b8" strokeWidth="2" />
            <path d="M2 17h8.500L2 27h9.500" fill="none" stroke="#b03a3a" strokeWidth="2.200" />
            <path d="M11 5h18l-7 9v12l-5-3v-9z" fill="#a3a7ae" stroke="#70747c" />
            <path d="M14 6h5l1 8v9l-2-1v-8z" fill="#e6e8ec" />
          </svg>
        </Big>
        <Big lines={["查找和", "选择"]} width="w-[42px]" inline>
          <svg width="28" height="26" viewBox="0 0 28 26" stroke="#33456e">
            <path d="M7.500 2q2-2 4 0v4h1.500v6l-1.500 12h-10.500v-8l4-10z" fill="#6a82b4" />
            <path d="M20.500 2q-2-2-4 0v4h-1.500v6l1.500 12h10.500v-8l-4-10z" fill="#6a82b4" />
            <path d="M4 9l-1.500 13M18.500 8v14" stroke="#d0daee" strokeWidth="2.500" />
            <path d="M1 17h11M16 17h11M5 6h6M17 6h6" />
            <rect x="12" y="8" width="4" height="5" fill="#3b4d78" />
          </svg>
        </Big>
      </div>
    </Group>
  );
}

function Ribbon() {
  return (
    <div className="flex h-[106px] shrink-0 gap-[3px] overflow-hidden border-t border-[#8db2e3] bg-gradient-to-b from-[#dbe6f4] to-[#dcecfb] pl-[3px] pt-0.5">
      <GroupClipboard />
      <GroupFont />
      <GroupAlign />
      <GroupNumber />
      <GroupStyles />
      <GroupCells />
      <GroupEdit />
    </div>
  );
}

/* ------------------------------------------------------------------ */
/* Formula bar and sheet                                               */
/* ------------------------------------------------------------------ */

function FormulaBar() {
  return (
    <div className="shrink-0 border-t-[3px] border-[#9dbcdf] bg-[#e3effc] pb-0.5">
      <div className={"flex h-[21px] border-y border-[#6c8fbe] bg-[#c9e9cd] text-[13px] text-black " + MONO}>
        <input aria-label="名称框" defaultValue="I11" className="w-[151px] bg-transparent text-center outline-none" />
        <button type="button" aria-label="名称列表" className="flex w-[14px] items-center justify-center bg-white">
          <svg width="8" height="4" viewBox="0 0 8 4"><path d="M0 0h8L4 4z" fill="#000" /></svg>
        </button>
        <div className="bg-white">
          <div className="flex h-full w-[82px] items-center justify-between rounded-l-full border-r border-[#8db2e3] bg-gradient-to-b from-[#e8f0fa] to-[#aac6ec] pl-1.5 pr-1 shadow-[inset_1px_0_0_#8aa6cc]">
            <span className="size-2 rounded-full bg-gradient-to-br from-[#8fa9cf] to-white" />
            <button type="button" className="font-['Liberation_Serif',serif] text-[15px] italic font-bold leading-none text-[#444]">
              f<span className="text-[11px]">x</span>
            </button>
          </div>
        </div>
        <input
          aria-label="编辑栏"
          defaultValue="≥0.8mm"
          className="min-w-0 flex-1 bg-transparent pl-3 outline-none"
        />
      </div>
    </div>
  );
}

const cols = ["A", "B", "C", "D", "E", "F", "G", "H", "I", "J", "K", "L", "M", "N", "O", "P", "Q"];

function RowHead({ n, tall, on }: { n: string; tall?: boolean; on?: boolean }) {
  return (
    <th
      scope="row"
      className={
        "border-y border-r border-[#9eb6ce] p-0 text-center font-['Liberation_Sans',sans-serif] text-[14px] font-normal leading-[14px] text-[#27413e] " +
        (tall ? "align-bottom " : "align-middle ") +
        (on ? "bg-[#fbc27a]" : "bg-[#e4ecf7]")
      }
    >
      {n}
    </th>
  );
}

const G = "bg-[#c9e9cd]";
const W = "bg-white";
const YL = "bg-[#ffff99]";
const YB = "bg-[#ffff00]";

function C({ t, bg, cs, rs, two }: { t: string | string[]; bg: string; cs?: number; rs?: number; two?: boolean }) {
  const lines = Array.isArray(t) ? t : [t];
  return (
    <td
      colSpan={cs}
      rowSpan={rs}
      className={"whitespace-nowrap border border-black p-0 text-center align-middle " + (two ? "leading-4 " : "leading-[14px] ") + bg}
    >
      {lines.map((l) => (
        <div key={l}>
          <Mixed text={l} />
        </div>
      ))}
    </td>
  );
}

function ActiveCell({ t }: { t: string }) {
  return (
    <td className="relative whitespace-nowrap border border-black bg-[#ffff00] p-0 text-center leading-[14px]">
      <Mixed text={t} />
      <span className="pointer-events-none absolute -inset-px border-2 border-[#10104a]" />
      <span className="pointer-events-none absolute -bottom-[3px] -right-[3px] size-[5px] border border-white bg-black" />
    </td>
  );
}

const ALL = "单个桥连总筋长必须";
const ONE = "单个桥连长必须";
const LONG = "V槽＋桥连/邮票孔＋桥连/桥连";

function Vals({ v }: { v: string[] }) {
  return (
    <>
      {v.map((t, i) => (
        <C key={i} t={t} bg={W} />
      ))}
    </>
  );
}

function Sheet() {
  return (
    <div className="min-h-0 flex-1 overflow-hidden bg-[#c9e9cd]">
      <table className={"w-[1447px] table-fixed border-collapse bg-[#c9e9cd] text-[13px] text-black " + CJK}>
        <colgroup>
          <col className="w-[26px]" />
          <col className="w-[10px]" />
          <col className="w-[93px]" />
          <col className="w-[86px]" />
          <col className="w-[86px]" />
          <col className="w-[230px]" />
          <col className="w-[71px]" />
          <col className="w-[67px]" />
          <col className="w-[107px]" />
          <col className="w-[107px]" />
          <col className="w-[116px]" />
          <col span={7} className="w-[64px]" />
        </colgroup>
        <thead>
          <tr className="h-[17px]">
            <th aria-label="全选" className="border border-[#9eb6ce] bg-[#b0cbf0] p-0">
              <svg width="9" height="9" viewBox="0 0 9 9" className="ml-auto mr-1"><path d="M9 0v9H0z" fill="#e8f2fe" /></svg>
            </th>
            {cols.map((c) => (
              <th
                key={c}
                scope="col"
                className={
                  "border border-t-[#6c8fbe] p-0 text-center font-['Liberation_Sans',sans-serif] text-[14px] font-normal leading-[15px] text-[#27413e] " +
                  (c === "I"
                    ? "border-[#f29536] bg-gradient-to-b from-[#f9d49c] to-[#f1bb5e]"
                    : "border-[#9eb6ce] bg-gradient-to-b from-[#f8fafd] to-[#d3dbe9]")
                }
              >
                {c}
              </th>
            ))}
          </tr>
        </thead>
        <tbody>
          <tr className="h-4">
            <RowHead n="4" />
            <td rowSpan={11} className="border-r-2 border-black p-0" />
            <C t="板厚H" bg={YL} />
            <C t="流程" bg={YL} cs={2} />
            <C t="类型" bg={YL} />
            <C t="设计要求" bg={YL} cs={2} />
            <C t="单元板内桥连2个" bg={YL} />
            <C t="单元板内桥连3个" bg={YL} />
            <C t="单元板内桥连≥4个" bg={YL} />
            <td rowSpan={11} colSpan={7} className="border-l-2 border-black p-0" />
          </tr>
          <tr className="h-4">
            <RowHead n="5" />
            <C t={["0.6≤H＜", "1.00mm"]} bg={G} rs={5} two />
            <C t="非包边" bg={G} cs={2} rs={2} />
            <C t="V槽＋桥连" bg={G} />
            <C t={ONE} bg={W} cs={2} />
            <Vals v={["≥1.6mm", "≥1.2mm", "≥0.8mm"]} />
          </tr>
          <tr className="h-4">
            <RowHead n="6" />
            <C t="邮票孔＋桥连或桥连" bg={G} />
            <C t={ALL} bg={W} cs={2} />
            <Vals v={["≥1.4mm", "≥1mm", "≥0.6mm"]} />
          </tr>
          <tr className="h-4">
            <RowHead n="7" />
            <C t={["包边", "（含铣半孔）"]} bg={G} rs={3} two />
            <C t="喷锡" bg={G} />
            <C t={LONG} bg={G} />
            <C t={ALL} bg={W} cs={2} />
            <Vals v={["≥3.5mm", "≥3.0mm", "≥2.5mm"]} />
          </tr>
          <tr className="h-4">
            <RowHead n="8" />
            <C t="非喷锡" bg={G} rs={2} />
            <C t="V槽＋桥连" bg={G} />
            <C t={ONE} bg={W} cs={2} />
            <Vals v={["≥2.0mm", "≥1.5mm", "≥1.0mm"]} />
          </tr>
          <tr className="h-4">
            <RowHead n="9" />
            <C t="邮票孔＋桥连/桥连" bg={G} />
            <C t={ALL} bg={W} cs={2} />
            <Vals v={["≥1.8mm", "≥1.3mm", "≥0.8mm"]} />
          </tr>
          <tr className="h-4">
            <RowHead n="10" />
            <C t="H≥1.00mm" bg={YB} rs={4} />
            <C t="非包边" bg={G} cs={2} rs={2} />
            <C t="V槽＋桥连" bg={G} />
            <C t={ONE} bg={W} cs={2} />
            <Vals v={["≥1.4mm", "≥1.0mm", "≥0.8mm"]} />
          </tr>
          <tr className="h-4">
            <RowHead n="11" on />
            <C t="邮票孔＋桥连或桥连" bg={YB} />
            <C t={ALL} bg={W} cs={2} />
            <C t="≥1.2mm" bg={W} />
            <ActiveCell t="≥0.8mm" />
            <C t="≥0.6mm" bg={W} />
          </tr>
          <tr className="h-[34px]">
            <RowHead n="12" tall />
            <C t={["包边", "（含铣半孔）"]} bg={G} rs={2} two />
            <C t="喷锡" bg={G} />
            <C t={LONG} bg={G} />
            <C t={ALL} bg={W} cs={2} />
            <Vals v={["≥3.0mm", "≥2.5mm", "≥2.0mm"]} />
          </tr>
          <tr className="h-[28px]">
            <RowHead n="13" tall />
            <C t="非喷锡" bg={G} />
            <C t={LONG} bg={G} />
            <C t={ALL} bg={W} cs={2} />
            <Vals v={["≥1.8mm", "≥1.3mm", "≥0.8mm"]} />
          </tr>
          <tr className="h-4">
            <RowHead n="14" />
            <td colSpan={9} className="border border-b-2 border-black p-0 pl-0.5 text-left leading-[14px]">
              注：总筋长为邮票孔与孔和外形与孔间距加起来的长度
            </td>
          </tr>
          <tr className="h-4">
            <RowHead n="" />
            <td colSpan={17} className="p-0" />
          </tr>
        </tbody>
      </table>
    </div>
  );
}

function Spreadsheet() {
  return (
    <section className={"absolute bottom-0 left-[95px] right-0 top-[575px] flex flex-col overflow-hidden border-l border-[#c4e8f4] bg-white " + CJK}>
      <TitleBar />
      <TabRow />
      <Ribbon />
      <FormulaBar />
      <Sheet />
      <OfficeButton />
    </section>
  );
}

export default function App() {
  return (
    <main className="relative flex h-screen flex-col overflow-hidden bg-black">
      <header className="flex h-[23px] shrink-0 items-start gap-[5px] bg-white font-['Noto_Sans',sans-serif] text-[13px] leading-4 text-[#999]">
        <AppIcon />
        <h1 className="whitespace-nowrap">Graphic Editor 9.07b2 (00@HY-HYCAM-PC148 - Windows, pid:9960)</h1>
      </header>
      <MenuBar />
      <div className="flex min-h-0 flex-1">
        <Sidebar />
        <BoardCanvas />
      </div>
      <Popview />
      <Spreadsheet />
    </main>
  );
}
